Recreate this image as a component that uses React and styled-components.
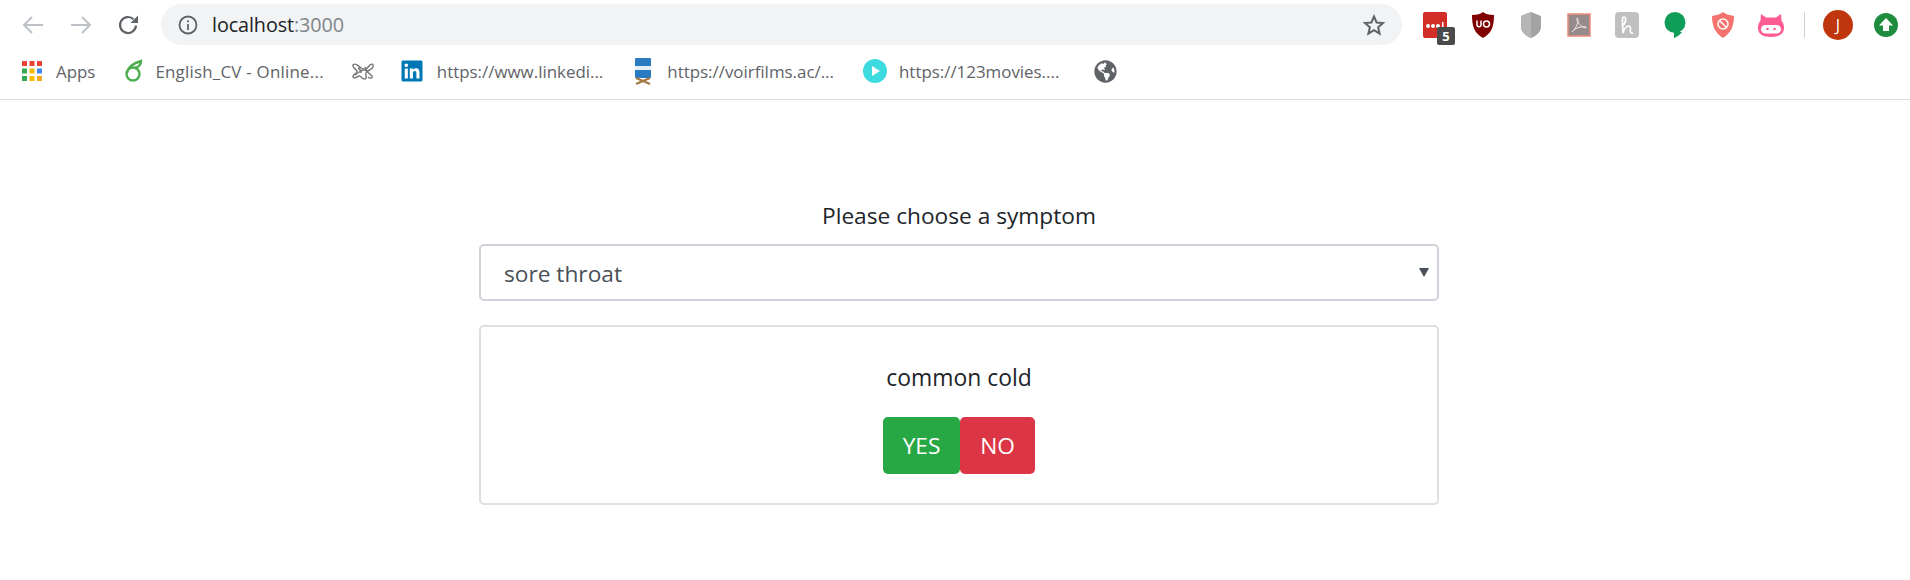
import React from "react";
import styled, { createGlobalStyle } from "styled-components";
import { FaLinkedin, FaGlobeAmericas } from "react-icons/fa";

const GlobalStyle = createGlobalStyle`
  html, body {
    margin: 0;
    padding: 0;
    background: #fff;
    font-family: "Open Sans", "Noto Sans", sans-serif;
  }
`;

const Chrome = styled.header`
  height: 99px;
  border-bottom: 1px solid #dadce0;
  display: flex;
  flex-direction: column;
`;

const Toolbar = styled.div`
  height: 50px;
  display: flex;
  align-items: center;
  padding-left: 21px;
`;

const NavButton = styled.span`
  width: 24px;
  height: 24px;
  margin-right: ${(props) => props.$gap || 24}px;
  display: flex;
`;

const Omnibox = styled.div`
  width: 1241px;
  height: 41px;
  margin-left: -5px;
  margin-top: -1px;
  border-radius: 21px;
  background: #f1f3f4;
  display: flex;
  align-items: center;
  padding: 0 16px 0 17px;
  box-sizing: border-box;
`;

const Url = styled.div`
  flex: 1;
  margin-left: 14px;
  font-size: 19.8px;
  letter-spacing: -0.1px;
  color: #202124;
`;

const UrlPort = styled.span`
  color: #80868b;
`;

const Extensions = styled.div`
  display: flex;
  align-items: center;
  margin-left: 9px;
`;

const ExtensionSlot = styled.span`
  position: relative;
  width: 48px;
  height: 32px;
  display: flex;
  align-items: center;
  justify-content: center;
`;

const Badge = styled.span`
  position: absolute;
  left: 26px;
  top: 18px;
  width: 18px;
  height: 18px;
  border-radius: 2px;
  background: #4a4a4a;
  color: #fff;
  font-size: 13px;
  font-weight: 700;
  line-height: 18px;
  text-align: center;
`;

const Divider = styled.span`
  width: 1px;
  height: 26px;
  background: #d0d2d5;
  margin: 0 9px 0 9px;
`;

const Avatar = styled.span`
  width: 30px;
  height: 30px;
  margin: 0 9px 0 9px;
  border-radius: 50%;
  background: #bf360c;
  color: #fff;
  font-size: 16px;
  line-height: 30px;
  text-align: center;
`;

const BookmarkBar = styled.nav`
  height: 46px;
  display: flex;
  align-items: center;
  padding-left: 22px;
  margin-top: -2px;
`;

const Bookmark = styled.span`
  display: flex;
  align-items: center;
  gap: ${(props) => props.$iconGap || 13}px;
  margin-right: ${(props) => props.$gap}px;
  font-size: 16.9px;
  letter-spacing: ${(props) => props.$tracking || 0}px;
  color: #5f6368;
  white-space: nowrap;
`;

const Page = styled.main`
  width: 960px;
  margin: 0 0 0 479px;
  padding-top: 100px;
  display: flex;
  flex-direction: column;
`;

const Label = styled.label`
  text-align: center;
  font-size: 22.7px;
  line-height: 32px;
  color: #212529;
  margin-bottom: 12px;
`;

const SelectWrap = styled.div`
  position: relative;
  margin-bottom: 24px;
`;

const Select = styled.select`
  display: block;
  width: 100%;
  height: 57px;
  appearance: none;
  box-sizing: border-box;
  border: 2px solid #ced4da;
  border-radius: 5px;
  background: #fff;
  padding: 2px 23px 0;
  font-family: inherit;
  font-size: 22.7px;
  color: #495057;
`;

const Caret = styled.span`
  position: absolute;
  right: 10px;
  top: 24px;
  width: 0;
  height: 0;
  border-left: 5px solid transparent;
  border-right: 5px solid transparent;
  border-top: 9px solid #495057;
  pointer-events: none;
`;

const Card = styled.section`
  height: 180px;
  box-sizing: border-box;
  border: 2px solid #dfdfdf;
  border-radius: 5px;
  padding-top: 35px;
  display: flex;
  flex-direction: column;
  align-items: center;
`;

const CardTitle = styled.p`
  margin: 0 0 23px;
  font-size: 22.9px;
  line-height: 32px;
  color: #212529;
`;

const Buttons = styled.div`
  display: flex;
`;

const Button = styled.button`
  width: ${(props) => props.$width}px;
  height: 57px;
  border: none;
  border-radius: 5px;
  background: ${(props) => props.$color};
  color: #fff;
  font-family: inherit;
  font-size: 22.7px;
  padding: 0;
`;

const Back = () => (
  <svg width="24" height="24" viewBox="0 0 24 24" fill="none" stroke="#bdc1c6" strokeWidth="2">
    <path d="M22 12H3M11 4l-8 8 8 8" />
  </svg>
);
const Forward = () => (
  <svg width="24" height="24" viewBox="0 0 24 24" fill="none" stroke="#bdc1c6" strokeWidth="2">
    <path d="M2 12h19M13 4l8 8-8 8" />
  </svg>
);
const Reload = () => (
  <svg width="24" height="24" viewBox="0 0 24 24" fill="none">
    <path d="M19 12.5a8 8 0 1 1-2.400-6.200" stroke="#5f6368" strokeWidth="2.200" />
    <path d="M21 2.500V10h-7.500z" fill="#5f6368" />
  </svg>
);
const Info = () => (
  <svg width="20" height="20" viewBox="0 0 20 20" fill="none" stroke="#5f6368" strokeWidth="1.800">
    <circle cx="10" cy="10" r="8.500" />
    <path d="M10 9v6M10 5.200v2" />
  </svg>
);
const Star = () => (
  <svg width="24" height="24" viewBox="0 0 24 24" fill="none" stroke="#5f6368" strokeWidth="2">
    <path d="M12 3.500l2.600 6 6.400.6-4.900 4.200 1.500 6.300-5.600-3.400-5.600 3.400 1.500-6.300L3 10.100l6.400-.6z" />
  </svg>
);

const APP_COLORS = ["#ea4335", "#ea4335", "#ea4335", "#34a853", "#fbbc05", "#4285f4", "#34a853", "#fbbc05", "#f9a825"];

const AppsIcon = () => (
  <svg width="20" height="20" viewBox="0 0 20 20">
    {APP_COLORS.map((color, i) => (
      <rect key={i} x={(i % 3) * 7.500} y={Math.floor(i / 3) * 7.500} width="5" height="5" fill={color} />
    ))}
  </svg>
);
const LeafIcon = () => (
  <svg width="20" height="24" viewBox="0 0 20 24" fill="none" stroke="#4cae4f" strokeWidth="2.400">
    <circle cx="9" cy="15" r="6.500" />
    <path d="M3 14C4 8 10 4 17 2c0 3-2 6-6 7" />
  </svg>
);
const KnotIcon = () => (
  <svg width="24" height="22" viewBox="0 0 24 22" fill="none" stroke="#777" strokeWidth="1.400">
    <path d="M2 5c3-3 5 1 8 3s6 1 8-2 5-2 4 1-6 3-7 6 2 5-1 6-4-4-6-3-5 3-6 1 3-3 4-5-5-4-4-7z" />
    <path d="M4 15c3-2 5-4 8-5s6 4 9 6c1 2-2 3-4 1" />
    <path d="M7 8c2 1 3 3 3 5M14 7c1 2 1 3 3 5" />
  </svg>
);
const FilmIcon = () => (
  <svg width="22" height="28" viewBox="0 0 22 28">
    <rect x="3" y="1" width="16" height="20" rx="1" fill="#2b7bc0" />
    <rect x="3" y="9" width="16" height="4" fill="#e6eef5" />
    <path d="M4 21l14 6M18 21L4 27" stroke="#a5763f" strokeWidth="2" />
  </svg>
);
const PlayIcon = () => (
  <svg width="24" height="24" viewBox="0 0 24 24">
    <circle cx="12" cy="12" r="12" fill="#3ddbe0" />
    <path d="M9 7l8 5-8 5z" fill="#fff" />
  </svg>
);
const LastPassIcon = () => (
  <svg width="24" height="26" viewBox="0 0 24 26">
    <rect width="24" height="26" rx="2" fill="#d32d27" />
    <circle cx="5" cy="14" r="2" fill="#fff" />
    <circle cx="10" cy="14" r="2" fill="#fff" />
    <circle cx="15" cy="14" r="2" fill="#fff" />
    <rect x="19" y="10" width="1.500" height="7" fill="#fff" />
  </svg>
);
const UBlockIcon = () => (
  <svg width="22" height="26" viewBox="0 0 22 26">
    <path d="M11 0c2 2 6 3 11 3 0 11-2 18-11 23C2 21 0 14 0 3c5 0 9-1 11-3z" fill="#800000" />
    <path d="M5 8.500v4c0 3 4 3 4 0v-4" fill="none" stroke="#fff" strokeWidth="1.500" />
    <circle cx="14.500" cy="12" r="3" fill="none" stroke="#fff" strokeWidth="1.500" />
  </svg>
);
const GrayShield = () => (
  <svg width="20" height="26" viewBox="0 0 20 26">
    <path d="M10 0l10 4v11c0 5-5 9-10 11C5 24 0 20 0 15V4z" fill="#a3a3a3" />
    <path d="M10 0v26C5 24 0 20 0 15V4z" fill="#b5b5b5" />
  </svg>
);
const AcrobatIcon = () => (
  <svg width="24" height="24" viewBox="0 0 24 24" fill="none">
    <rect x="1" y="1" width="22" height="22" fill="#968a8a" stroke="#ef8a7c" strokeWidth="1.500" />
    <path d="M5 19c3-2 6-8 6-12 0-3-2-2-1 0 2 5 5 7 9 8 1-1-1-2-4-1-4 0-8 2-10 5z" stroke="#ece8e8" strokeWidth="1" />
  </svg>
);
const HoneyBadge = styled.span`
  width: 24px;
  height: 26px;
  border-radius: 4px;
  background: #c0c0c0;
  display: flex;
  align-items: center;
  justify-content: center;
`;
const HoneyIcon = () => (
  <HoneyBadge>
    <svg width="16" height="20" viewBox="0 0 16 20" fill="none" stroke="#fff" strokeWidth="1.700">
      <path d="M3 12c4-4 5-10 2-10S4 10 4 18c1-4 3-7 6-7 3 0 0 6 2 7h2" />
    </svg>
  </HoneyBadge>
);
const HangoutsIcon = () => (
  <svg width="22" height="26" viewBox="0 0 22 26">
    <circle cx="11" cy="10.500" r="10.500" fill="#109d58" />
    <path d="M10 20v6c3-1 6-3 8-6z" fill="#109d58" />
  </svg>
);
const BlockShield = () => (
  <svg width="22" height="26" viewBox="0 0 22 26">
    <path d="M11 0c2 2 6 3 11 4 0 10-3 17-11 22C3 21 0 14 0 4c5-1 9-2 11-4z" fill="#f4736e" />
    <circle cx="11" cy="12" r="5" fill="none" stroke="#fff" strokeWidth="1.500" />
    <path d="M7.500 8.500l7 7" stroke="#fff" strokeWidth="1.500" />
  </svg>
);
const PigIcon = () => (
  <svg width="26" height="23" viewBox="0 0 26 23">
    <path d="M3 0l5 3.500h10L23 0l.6 7c2.400 2.500 2.400 5 2.400 7 0 6-5 9-13 9S0 20 0 14c0-2 0-4.500 2.400-7z" fill="#ff5c93" />
    <rect x="3" y="11" width="20" height="8.500" rx="4.250" fill="#fff" />
    <circle cx="9.500" cy="15" r="1.300" fill="#ff5c93" />
    <circle cx="16.500" cy="15" r="1.300" fill="#ff5c93" />
  </svg>
);
const UpdateIcon = () => (
  <svg width="24" height="24" viewBox="0 0 24 24">
    <circle cx="12" cy="12" r="12" fill="#1e8e3e" />
    <path d="M12 5l7 7.500h-4V18H9v-5.500H5z" fill="#fff" />
  </svg>
);

export default function App() {
  return (
    <>
      <GlobalStyle />
      <Chrome>
        <Toolbar>
          <NavButton><Back /></NavButton>
          <NavButton><Forward /></NavButton>
          <NavButton $gap={25}><Reload /></NavButton>
          <Omnibox>
            <Info />
            <Url>
              localhost<UrlPort>:3000</UrlPort>
            </Url>
            <Star />
          </Omnibox>
          <Extensions>
            <ExtensionSlot>
              <LastPassIcon />
              <Badge>5</Badge>
            </ExtensionSlot>
            <ExtensionSlot><UBlockIcon /></ExtensionSlot>
            <ExtensionSlot><GrayShield /></ExtensionSlot>
            <ExtensionSlot><AcrobatIcon /></ExtensionSlot>
            <ExtensionSlot><HoneyIcon /></ExtensionSlot>
            <ExtensionSlot><HangoutsIcon /></ExtensionSlot>
            <ExtensionSlot><BlockShield /></ExtensionSlot>
            <ExtensionSlot><PigIcon /></ExtensionSlot>
            <Divider />
            <Avatar>J</Avatar>
            <ExtensionSlot><UpdateIcon /></ExtensionSlot>
          </Extensions>
        </Toolbar>
        <BookmarkBar>
          <Bookmark $gap={29} $iconGap={14}><AppsIcon />Apps</Bookmark>
          <Bookmark $gap={27} $iconGap={11} $tracking={0.23}><LeafIcon />English_CV - Online...</Bookmark>
          <Bookmark $gap={25}><KnotIcon /></Bookmark>
          <Bookmark $gap={29}><FaLinkedin size={24} color="#0077b5" />https://www.linkedi...</Bookmark>
          <Bookmark $gap={29}><FilmIcon />https://voirfilms.ac/...</Bookmark>
          <Bookmark $gap={35} $iconGap={12}><PlayIcon />https://123movies....</Bookmark>
          <Bookmark $gap={0}><FaGlobeAmericas size={23} color="#5f6368" /></Bookmark>
        </BookmarkBar>
      </Chrome>
      <Page>
        <Label htmlFor="symptom">Please choose a symptom</Label>
        <SelectWrap>
          <Select id="symptom" defaultValue="sore throat">
            <option>sore throat</option>
          </Select>
          <Caret />
        </SelectWrap>
        <Card>
          <CardTitle>common cold</CardTitle>
          <Buttons>
            <Button $width={77} $color="#28a745">YES</Button>
            <Button $width={75} $color="#dc3545">NO</Button>
          </Buttons>
        </Card>
      </Page>
    </>
  );
}
